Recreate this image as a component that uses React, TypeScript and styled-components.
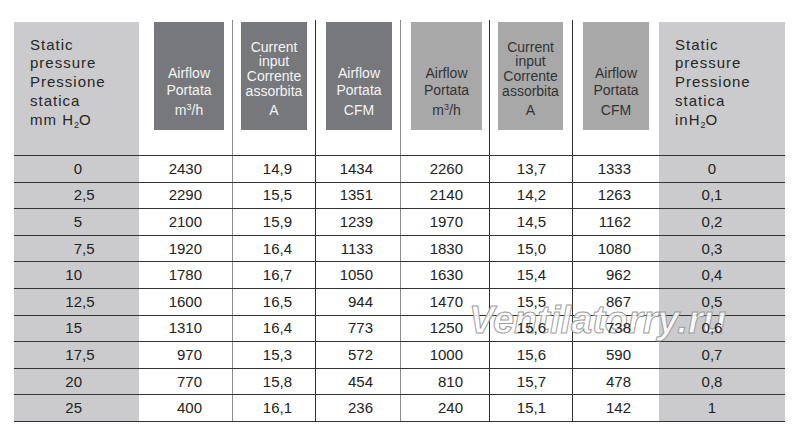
import styled, { createGlobalStyle } from 'styled-components';

type Tone = 'dark' | 'light';
type Line = 'none' | 'soft' | 'hard';
type Unit = 'm3h' | 'A' | 'CFM';

interface Column {
    width: number;
    line: Line;
    pad: number;
    box?: { left: number; width: number; tone: Tone };
    label?: string[];
    labelHeight?: number;
    unit?: Unit;
}

const GlobalStyle = createGlobalStyle`
    body {
        margin: 0;
        background: #ffffff;
        font-family: 'Liberation Sans', Arial, sans-serif;
    }
`;

const airflow = ['Airflow', 'Portata'];
const current = ['Current', 'input', 'Corrente', 'assorbita'];

const columns: Column[] = [
    { width: 125, line: 'none', pad: 0 },
    { width: 93, line: 'none', pad: 30, box: { left: 15, width: 70, tone: 'dark' }, label: airflow, labelHeight: 17, unit: 'm3h' },
    { width: 83, line: 'soft', pad: 23, box: { left: 8, width: 66, tone: 'dark' }, label: current, labelHeight: 14.7, unit: 'A' },
    { width: 85, line: 'hard', pad: 27, box: { left: 10, width: 66, tone: 'dark' }, label: airflow, labelHeight: 17, unit: 'CFM' },
    { width: 89, line: 'soft', pad: 26, box: { left: 10, width: 71, tone: 'light' }, label: airflow, labelHeight: 17, unit: 'm3h' },
    { width: 83, line: 'hard', pad: 26, box: { left: 8, width: 65, tone: 'light' }, label: current, labelHeight: 14.7, unit: 'A' },
    { width: 87, line: 'hard', pad: 28, box: { left: 10, width: 66, tone: 'light' }, label: airflow, labelHeight: 17, unit: 'CFM' },
    { width: 126, line: 'none', pad: 0 },
];

const rows: string[][] = [
    ['0', '2430', '14,9', '1434', '2260', '13,7', '1333', '0'],
    ['2,5', '2290', '15,5', '1351', '2140', '14,2', '1263', '0,1'],
    ['5', '2100', '15,9', '1239', '1970', '14,5', '1162', '0,2'],
    ['7,5', '1920', '16,4', '1133', '1830', '15,0', '1080', '0,3'],
    ['10', '1780', '16,7', '1050', '1630', '15,4', '962', '0,4'],
    ['12,5', '1600', '16,5', '944', '1470', '15,5', '867', '0,5'],
    ['15', '1310', '16,4', '773', '1250', '15,6', '738', '0,6'],
    ['17,5', '970', '15,3', '572', '1000', '15,6', '590', '0,7'],
    ['20', '770', '15,8', '454', '810', '15,7', '478', '0,8'],
    ['25', '400', '16,1', '236', '240', '15,1', '142', '1'],
];

const gridColumns = columns.map((c) => `${c.width}px`).join(' ');

const lineColor = (line: Line) => {
    if (line === 'soft') return '1px solid #8c8c8c';
    if (line === 'hard') return '1px solid #2e2e2e';
    return 'none';
};

const UnitText = ({ unit }: { unit: Unit }) => {
    if (unit === 'm3h') {
        return (
            <>
                m<Sup>3</Sup>/h
            </>
        );
    }
    return <>{unit}</>;
};

const StubTitle = ({ unit }: { unit: string }) => (
    <StubHead>
        <StubFill>
            Static
            <br />
            pressure
            <br />
            Pressione
            <br />
            statica
            <br />
            {unit}H<Sub>2</Sub>O
        </StubFill>
    </StubHead>
);

const App = () => {
    const last = columns.length - 1;

    return (
        <>
            <GlobalStyle />
            <Page>
                <Sheet>
                    <HeaderRow>
                        <StubTitle unit='mm ' />
                        {columns.slice(1, last).map((col, i) => (
                            <HeadCell key={i} $line={col.line}>
                                <HeadBox $left={col.box!.left} $width={col.box!.width} $tone={col.box!.tone}>
                                    <HeadLabel $lineHeight={col.labelHeight!}>
                                        {col.label!.map((word) => (
                                            <div key={word}>{word}</div>
                                        ))}
                                    </HeadLabel>
                                    <HeadUnit>
                                        <UnitText unit={col.unit!} />
                                    </HeadUnit>
                                </HeadBox>
                            </HeadCell>
                        ))}
                        <StubTitle unit='in' />
                    </HeaderRow>

                    {rows.map((row) => {
                        const [whole, frac] = row[0].split(',');
                        return (
                            <DataRow key={row[0]}>
                                <StubCell>
                                    <Num>
                                        <WholePart>{whole}</WholePart>
                                        {frac !== undefined && `,${frac}`}
                                    </Num>
                                </StubCell>
                                {row.slice(1, last).map((value, i) => (
                                    <ValueCell key={i} $line={columns[i + 1].line} $pad={columns[i + 1].pad}>
                                        <Num>{value}</Num>
                                    </ValueCell>
                                ))}
                                <InchCell>
                                    <Num>{row[last]}</Num>
                                </InchCell>
                            </DataRow>
                        );
                    })}

                    <Watermark>Ventilatorry.ru</Watermark>
                </Sheet>
            </Page>
        </>
    );
};

const Page = styled.main`
    width: 800px;
    height: 438px;
    padding: 20px 0 0 14px;
    box-sizing: border-box;
    overflow: hidden;
`;

const Sheet = styled.div`
    position: relative;
    width: 771px;
    color: #222222;
`;

const HeaderRow = styled.div`
    display: grid;
    grid-template-columns: ${gridColumns};
    height: 136px;
    box-sizing: border-box;
    border-bottom: 1px solid #333333;
`;

const DataRow = styled.div`
    display: grid;
    grid-template-columns: ${gridColumns};
    height: 26.6px;
    box-sizing: border-box;
    border-bottom: 1px solid #333333;
`;

const StubHead = styled.div`
    padding-top: 2px;
    display: flex;
`;

const StubFill = styled.div`
    flex: 1;
    background: #cbcbcd;
    padding: 13.6px 0 0 16px;
    font-size: 15px;
    line-height: 18.8px;
    letter-spacing: 1px;
    color: #262626;
    white-space: pre;
`;

const Sub = styled.span`
    font-size: 9px;
    line-height: 0;
    vertical-align: -3px;
    letter-spacing: 0;
`;

const Sup = styled.span`
    font-size: 9px;
    line-height: 0;
    vertical-align: 5px;
`;

const HeadCell = styled.div<{ $line: Line }>`
    border-left: ${({ $line }) => lineColor($line)};
    padding-top: 2px;
`;

const HeadBox = styled.div<{ $left: number; $width: number; $tone: Tone }>`
    margin-left: ${({ $left }) => $left}px;
    width: ${({ $width }) => $width}px;
    height: 108px;
    box-sizing: border-box;
    padding-bottom: 12px;
    display: flex;
    flex-direction: column;
    justify-content: flex-end;
    align-items: center;
    background: ${({ $tone }) => ($tone === 'dark' ? '#76787c' : '#a8a8a9')};
    color: ${({ $tone }) => ($tone === 'dark' ? '#f4f4f4' : '#333333')};
    font-size: 14px;
    text-align: center;
`;

const HeadLabel = styled.div<{ $lineHeight: number }>`
    line-height: ${({ $lineHeight }) => $lineHeight}px;
`;

const HeadUnit = styled.div`
    margin-top: 3.5px;
    line-height: 16px;
`;

const StubCell = styled.div`
    background: #cbcbcd;
    display: flex;
    align-items: center;
    font-size: 15px;
`;

const WholePart = styled.span`
    display: inline-block;
    width: 68px;
    text-align: right;
`;

const ValueCell = styled.div<{ $line: Line; $pad: number }>`
    border-left: ${({ $line }) => lineColor($line)};
    display: flex;
    align-items: center;
    justify-content: flex-end;
    padding-right: ${({ $pad }) => $pad}px;
    font-size: 15px;
`;

const InchCell = styled.div`
    background: #cbcbcd;
    display: flex;
    align-items: center;
    justify-content: center;
    padding-right: 20px;
    font-size: 15px;
`;

const Num = styled.span`
    position: relative;
    z-index: 2;
    line-height: 18px;
`;

const Watermark = styled.div`
    position: absolute;
    left: 455px;
    top: 281px;
    z-index: 1;
    font-size: 38px;
    line-height: 38px;
    font-weight: bold;
    font-style: italic;
    color: rgba(255, 255, 255, 0.85);
    -webkit-text-stroke: 1px #9c9c9c;
    pointer-events: none;
    white-space: nowrap;
`;

export default App;
